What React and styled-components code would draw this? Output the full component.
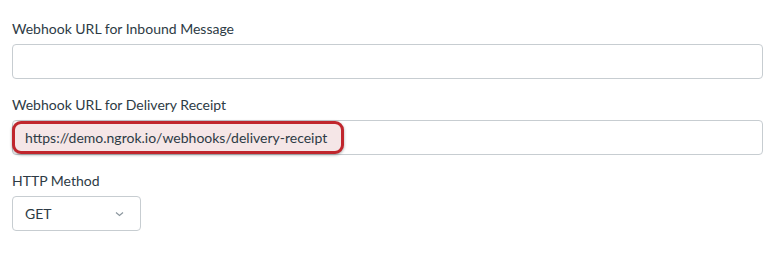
import React from 'react';
import styled, { createGlobalStyle } from 'styled-components';

const GlobalStyle = createGlobalStyle`
    body {
        margin: 0;
        background: #ffffff;
        font-family: Lato, "Open Sans", sans-serif;
        color: #2d3b45;
    }
`

const fields = [
    { label: 'Webhook URL for Inbound Message', value: '' },
    { label: 'Webhook URL for Delivery Receipt', value: 'https://demo.ngrok.io/webhooks/delivery-receipt', marked: true },
];

const App = () => {
    return (
        <>
            <GlobalStyle />
            <Form>
                {fields.map((f) => (
                    <Field key={f.label}>
                        <Label>{f.label}</Label>
                        <TextBox>
                            {f.marked ? <Marked>{f.value}</Marked> : f.value}
                        </TextBox>
                    </Field>
                ))}
                <Field>
                    <Label>HTTP Method</Label>
                    <Select>
                        <span>GET</span>
                        <svg width="9" height="6" viewBox="0 0 9 6">
                            <polyline points="1,1.5 4.5,4.5 8,1.5" fill="none" stroke="#8b969e" strokeWidth="1.2" />
                        </svg>
                    </Select>
                </Field>
            </Form>
        </>
    )
}

const Form = styled.div`
    display: flex;
    flex-direction: column;
    gap: 16px;
    padding: 19px 11px 0 12px;
`
const Field = styled.div`
    display: flex;
    flex-direction: column;
    gap: 5px;
`
const Label = styled.div`
    font-size: 14px;
    line-height: 20px;
`
const TextBox = styled.div`
    box-sizing: border-box;
    height: 35px;
    border: 1px solid #c7cdd1;
    border-radius: 4px;
    display: flex;
    align-items: center;
    font-size: 14px;
`
const Marked = styled.span`
    box-sizing: border-box;
    height: 33px;
    display: flex;
    align-items: center;
    padding: 0 14px 0 10px;
    border: 3px solid #c0262d;
    border-radius: 9px;
    background: #f5e6e7;
    box-shadow: 0 1px 3px rgba(0, 0, 0, 0.35);
    margin-left: -1px;
`
const Select = styled.div`
    box-sizing: border-box;
    width: 129px;
    height: 35px;
    border: 1px solid #c7cdd1;
    border-radius: 4px;
    display: flex;
    align-items: center;
    justify-content: space-between;
    padding: 0 16px 0 12px;
    font-size: 14px;
`

export default App;
